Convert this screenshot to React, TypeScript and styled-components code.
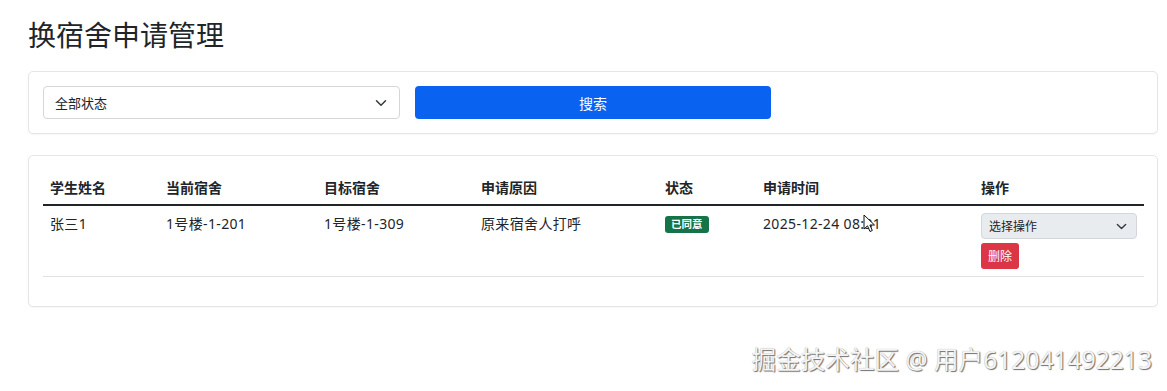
import React from "react";
import styled, { createGlobalStyle } from "styled-components";

const GlobalStyle = createGlobalStyle`
  * { box-sizing: border-box; }
  body {
    margin: 0;
    background: #ffffff;
    color: #212529;
    font-family: "Noto Sans", "Noto Sans CJK SC", sans-serif;
    font-size: 14px;
  }
`;

const Page = styled.div`
  position: relative;
  width: 1167px;
  height: 391px;
  padding: 18px 9px 0 28px;
`;

const Title = styled.h2`
  margin: 0 0 19px;
  font-size: 28px;
  line-height: 34px;
  font-weight: 400;
  color: #212529;
`;

const Card = styled.div<{ $gap?: number }>`
  border: 1px solid #e3e5e8;
  border-radius: 5px;
  background: #fff;
  box-shadow: 0 1px 2px rgba(0, 0, 0, 0.04);
  padding: 14px 14px;
  margin-bottom: ${(p) => p.$gap ?? 0}px;
`;

const FilterGrid = styled.div`
  display: grid;
  grid-template-columns: repeat(3, 1fr);
  gap: 15px;
`;

const SelectBox = styled.div<{ $sm?: boolean; $grey?: boolean }>`
  display: flex;
  align-items: center;
  justify-content: space-between;
  height: ${(p) => (p.$sm ? 26 : 33)}px;
  padding: ${(p) => (p.$sm ? "0 9px 0 7px" : "0 12px 0 11px")};
  border: 1px solid #d3d7db;
  border-radius: 4px;
  background: ${(p) => (p.$grey ? "#e9ecef" : "#fff")};
  font-size: ${(p) => (p.$sm ? 12 : 13)}px;
  letter-spacing: 0;
  color: #212529;
`;

const PrimaryButton = styled.div`
  display: flex;
  align-items: center;
  justify-content: center;
  height: 33px;
  border-radius: 4px;
  background: #0a62f0;
  color: #fff;
  font-size: 14px;
`;

const Table = styled.table`
  width: 1101px;
  border-collapse: collapse;
  table-layout: fixed;
  margin-bottom: 15px;
`;

const Th = styled.th<{ $w: number }>`
  width: ${(p) => p.$w}px;
  text-align: left;
  font-weight: 700;
  font-size: 14px;
  padding: 7px 7px;
  height: 35px;
  border-bottom: 2px solid #212529;
  vertical-align: middle;
`;

const Td = styled.td`
  padding: 7px 7px;
  vertical-align: top;
  font-size: 14px;
  line-height: 21px;
  letter-spacing: 0.35px;
  border-bottom: 1px solid #e0e3e6;
  color: #212529;
`;

const TimeCell = styled(Td)`
  position: relative;
`;

const Badge = styled.span`
  display: inline-block;
  margin-top: 3px;
  padding: 0 6px;
  height: 17px;
  line-height: 17px;
  border-radius: 3px;
  background: #157347;
  color: #fff;
  font-size: 10.5px;
  font-weight: 700;
  letter-spacing: 0;
  vertical-align: top;
`;

const ActionStack = styled.div`
  display: flex;
  flex-direction: column;
  align-items: flex-start;
  gap: 4px;
`;

const FullWidth = styled.div`
  align-self: stretch;
`;

const DangerButton = styled.div`
  height: 26px;
  padding: 0 7px;
  display: flex;
  align-items: center;
  border-radius: 3px;
  background: #dc3545;
  color: #fff;
  font-size: 12px;
  letter-spacing: 0;
`;

const Cursor = styled.svg`
  position: absolute;
  left: 107px;
  top: 8px;
`;

const Watermark = styled.div`
  position: absolute;
  right: 15px;
  top: 340px;
  font-size: 24.6px;
  color: #f4f4f4;
  text-shadow: 1px 1px 1px rgba(0, 0, 0, 0.55), 0 0 1px rgba(0, 0, 0, 0.35);
  letter-spacing: 0;
`;

const Chevron = ({ size = 12 }: { size?: number }) => (
  <svg width={size} height={size} viewBox="0 0 16 16" fill="none">
    <path d="M2 5l6 6 6-6" stroke="#343a40" strokeWidth="2" strokeLinecap="round" strokeLinejoin="round" />
  </svg>
);

const columns: [string, number][] = [
  ["学生姓名", 116],
  ["当前宿舍", 158],
  ["目标宿舍", 157],
  ["申请原因", 184],
  ["状态", 98],
  ["申请时间", 218],
  ["操作", 170],
];

export default function App() {
  return (
    <>
      <GlobalStyle />
      <Page>
        <Title>换宿舍申请管理</Title>
        <Card $gap={21}>
          <FilterGrid>
            <SelectBox>
              <span>全部状态</span>
              <Chevron />
            </SelectBox>
            <PrimaryButton>搜索</PrimaryButton>
          </FilterGrid>
        </Card>
        <Card>
          <Table>
            <thead>
              <tr>
                {columns.map(([label, w]) => (
                  <Th key={label} $w={w}>
                    {label}
                  </Th>
                ))}
              </tr>
            </thead>
            <tbody>
              <tr>
                <Td>张三1</Td>
                <Td>1号楼-1-201</Td>
                <Td>1号楼-1-309</Td>
                <Td>原来宿舍人打呼</Td>
                <Td>
                  <Badge>已同意</Badge>
                </Td>
                <TimeCell>
                  2025-12-24 08:31
                  <Cursor width="13" height="19" viewBox="0 0 13 19">
                    <path
                      d="M1 1 L1 15 L4.5 11.8 L7 17.5 L9.3 16.5 L6.9 11 L11.5 11 Z"
                      fill="#fff"
                      stroke="#111"
                      strokeWidth="1"
                      strokeLinejoin="round"
                    />
                  </Cursor>
                </TimeCell>
                <Td>
                  <ActionStack>
                    <FullWidth>
                      <SelectBox $sm $grey>
                        <span>选择操作</span>
                        <Chevron size={11} />
                      </SelectBox>
                    </FullWidth>
                    <DangerButton>删除</DangerButton>
                  </ActionStack>
                </Td>
              </tr>
            </tbody>
          </Table>
        </Card>
        <Watermark>掘金技术社区 @ 用户612041492213</Watermark>
      </Page>
    </>
  );
}
